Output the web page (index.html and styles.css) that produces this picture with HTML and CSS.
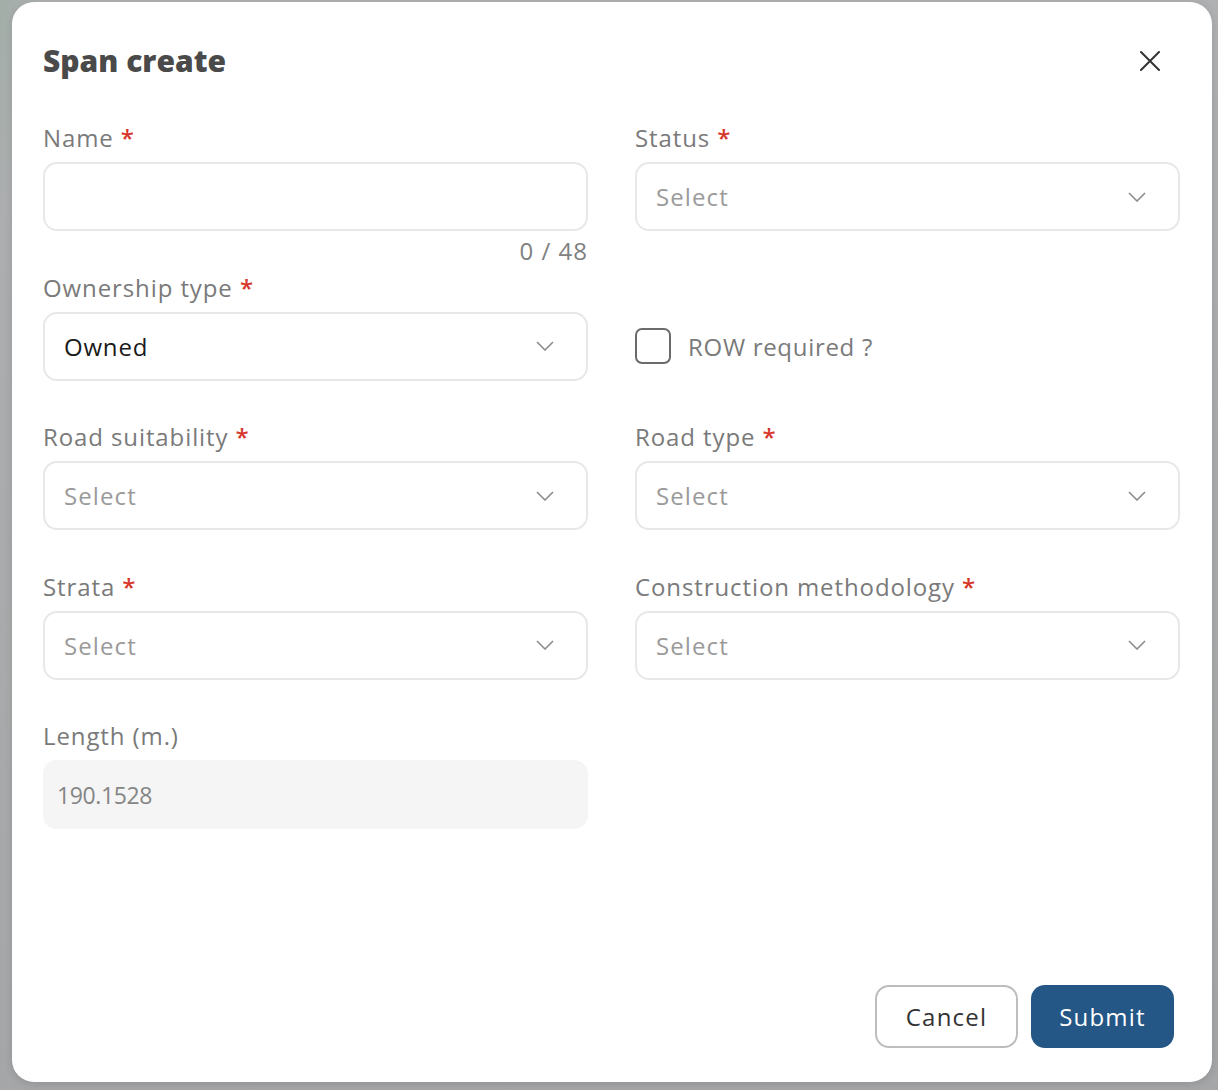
FILE: index.html
```html
<!DOCTYPE html>
<html lang="en">
<head>
<meta charset="utf-8">
<title>Span create</title>
<link rel="stylesheet" href="styles.css">
</head>
<body>
<div class="backdrop">
  <div class="modal">
    <header class="modal-header">
      <h1 class="title">Span create</h1>
      <button class="close" type="button" aria-label="Close">
        <svg width="20" height="20" viewBox="0 0 20 20"><path d="M1 1 L19 19 M19 1 L1 19" stroke="#333" stroke-width="2" fill="none" stroke-linecap="round"/></svg>
      </button>
    </header>

    <form class="form-grid">
      <div class="field">
        <label class="label">Name <span class="req">*</span></label>
        <input class="control" type="text">
        <div class="counter">0 / 48</div>
      </div>
      <div class="field">
        <label class="label">Status <span class="req">*</span></label>
        <div class="control select"><span class="placeholder">Select</span>
          <svg class="chev" width="18" height="10" viewBox="0 0 18 10"><path d="M1 1 L9 9 L17 1" stroke="#8c8c8c" stroke-width="1.6" fill="none"/></svg></div>
      </div>

      <div class="field">
        <label class="label">Ownership type <span class="req">*</span></label>
        <div class="control select"><span class="value">Owned</span>
          <svg class="chev" width="18" height="10" viewBox="0 0 18 10"><path d="M1 1 L9 9 L17 1" stroke="#8c8c8c" stroke-width="1.6" fill="none"/></svg></div>
      </div>
      <div class="field check-field">
        <label class="check"><span class="box"></span><span class="check-text">ROW required ?</span></label>
      </div>

      <div class="field">
        <label class="label">Road suitability <span class="req">*</span></label>
        <div class="control select"><span class="placeholder">Select</span>
          <svg class="chev" width="18" height="10" viewBox="0 0 18 10"><path d="M1 1 L9 9 L17 1" stroke="#8c8c8c" stroke-width="1.6" fill="none"/></svg></div>
      </div>
      <div class="field">
        <label class="label">Road type <span class="req">*</span></label>
        <div class="control select"><span class="placeholder">Select</span>
          <svg class="chev" width="18" height="10" viewBox="0 0 18 10"><path d="M1 1 L9 9 L17 1" stroke="#8c8c8c" stroke-width="1.6" fill="none"/></svg></div>
      </div>

      <div class="field">
        <label class="label">Strata <span class="req">*</span></label>
        <div class="control select"><span class="placeholder">Select</span>
          <svg class="chev" width="18" height="10" viewBox="0 0 18 10"><path d="M1 1 L9 9 L17 1" stroke="#8c8c8c" stroke-width="1.6" fill="none"/></svg></div>
      </div>
      <div class="field">
        <label class="label">Construction methodology <span class="req">*</span></label>
        <div class="control select"><span class="placeholder">Select</span>
          <svg class="chev" width="18" height="10" viewBox="0 0 18 10"><path d="M1 1 L9 9 L17 1" stroke="#8c8c8c" stroke-width="1.6" fill="none"/></svg></div>
      </div>

      <div class="field">
        <label class="label">Length (m.)</label>
        <div class="control readonly">190.1528</div>
      </div>
    </form>

    <footer class="footer">
      <button class="btn btn-cancel" type="button">Cancel</button>
      <button class="btn btn-submit" type="button">Submit</button>
    </footer>
  </div>
</div>
</body>
</html>
```
FILE: styles.css
```css
* { box-sizing: border-box; }

html, body {
  margin: 0;
  padding: 0;
}

body {
  width: 1218px;
  height: 1090px;
  overflow: hidden;
  font-family: "Open Sans", "Noto Sans", sans-serif;
  background: #a7a9aa;
}

.backdrop {
  width: 1218px;
  height: 1090px;
  padding: 2px 6px 8px 12px;
  background:
    linear-gradient(100deg, rgba(140,170,150,0.35) 0, rgba(140,170,150,0) 40px),
    linear-gradient(180deg, #aeb0b1 0%, #a4a6a8 100%);
}

.modal {
  width: 1200px;
  height: 1080px;
  background: #ffffff;
  border-radius: 22px;
  display: flex;
  flex-direction: column;
  box-shadow: 0 2px 8px rgba(0,0,0,0.12);
}

.modal-header {
  display: flex;
  align-items: center;
  justify-content: space-between;
  height: 77px;
  padding: 41px 52px 0 31px;
}

.title {
  margin: 0;
  font-size: 30px;
  line-height: 36px;
  font-weight: 800;
  color: #4a4a4a;
  letter-spacing: 0;
}

.close {
  width: 20px;
  height: 20px;
  padding: 0;
  border: 0;
  background: none;
  display: flex;
}

.form-grid {
  margin: 47px 0 0 0;
  padding: 0 32px 0 31px;
  display: grid;
  grid-template-columns: 545px 545px;
  column-gap: 47px;
  grid-auto-rows: 149.5px;
}

.field {
  display: flex;
  flex-direction: column;
}

.label {
  font-size: 24px;
  line-height: 24px;
  color: #7a7a7a;
  margin-bottom: 12px;
  letter-spacing: 0.9px;
}

.req {
  color: #d8382c;
  font-weight: 600;
}

.control {
  height: 69px;
  width: 100%;
  border: 2px solid #e8e8e8;
  border-radius: 14px;
  background: #fff;
  padding: 0 19px;
  display: flex;
  align-items: center;
  font-family: inherit;
  font-size: 24px;
  outline: none;
}

.select {
  justify-content: space-between;
  padding-right: 32px;
}

.placeholder {
  color: #9a9a9a;
  letter-spacing: 1.1px;
}

.value {
  color: #1a1a1a;
  letter-spacing: 0.8px;
}

.chev { display: block; }

.counter {
  margin-top: 8px;
  text-align: right;
  font-size: 24px;
  line-height: 24px;
  color: #808080;
  letter-spacing: 1px;
}

.check-field {
  padding-top: 36px;
}

.check {
  height: 69px;
  display: flex;
  align-items: center;
  gap: 17px;
}

.box {
  width: 36px;
  height: 36px;
  border: 2px solid #6b6b6b;
  border-radius: 7px;
}

.check-text {
  font-size: 24px;
  color: #7a7a7a;
  letter-spacing: 0.7px;
}

.readonly {
  background: #f5f5f5;
  border-color: #f5f5f5;
  padding-left: 12px;
  color: #858585;
  font-size: 23px;
  letter-spacing: -0.4px;
}

.footer {
  margin-top: auto;
  display: flex;
  justify-content: flex-end;
  gap: 13px;
  padding: 0 38px 34px 0;
}

.btn {
  height: 63px;
  border-radius: 14px;
  font-family: inherit;
  font-size: 24px;
  letter-spacing: 1.2px;
  cursor: pointer;
}

.btn-cancel {
  width: 143px;
  background: #fff;
  border: 2px solid #bdbdbd;
  color: #333;
}

.btn-submit {
  width: 143px;
  background: #245686;
  border: 0;
  color: #fff;
}
```
